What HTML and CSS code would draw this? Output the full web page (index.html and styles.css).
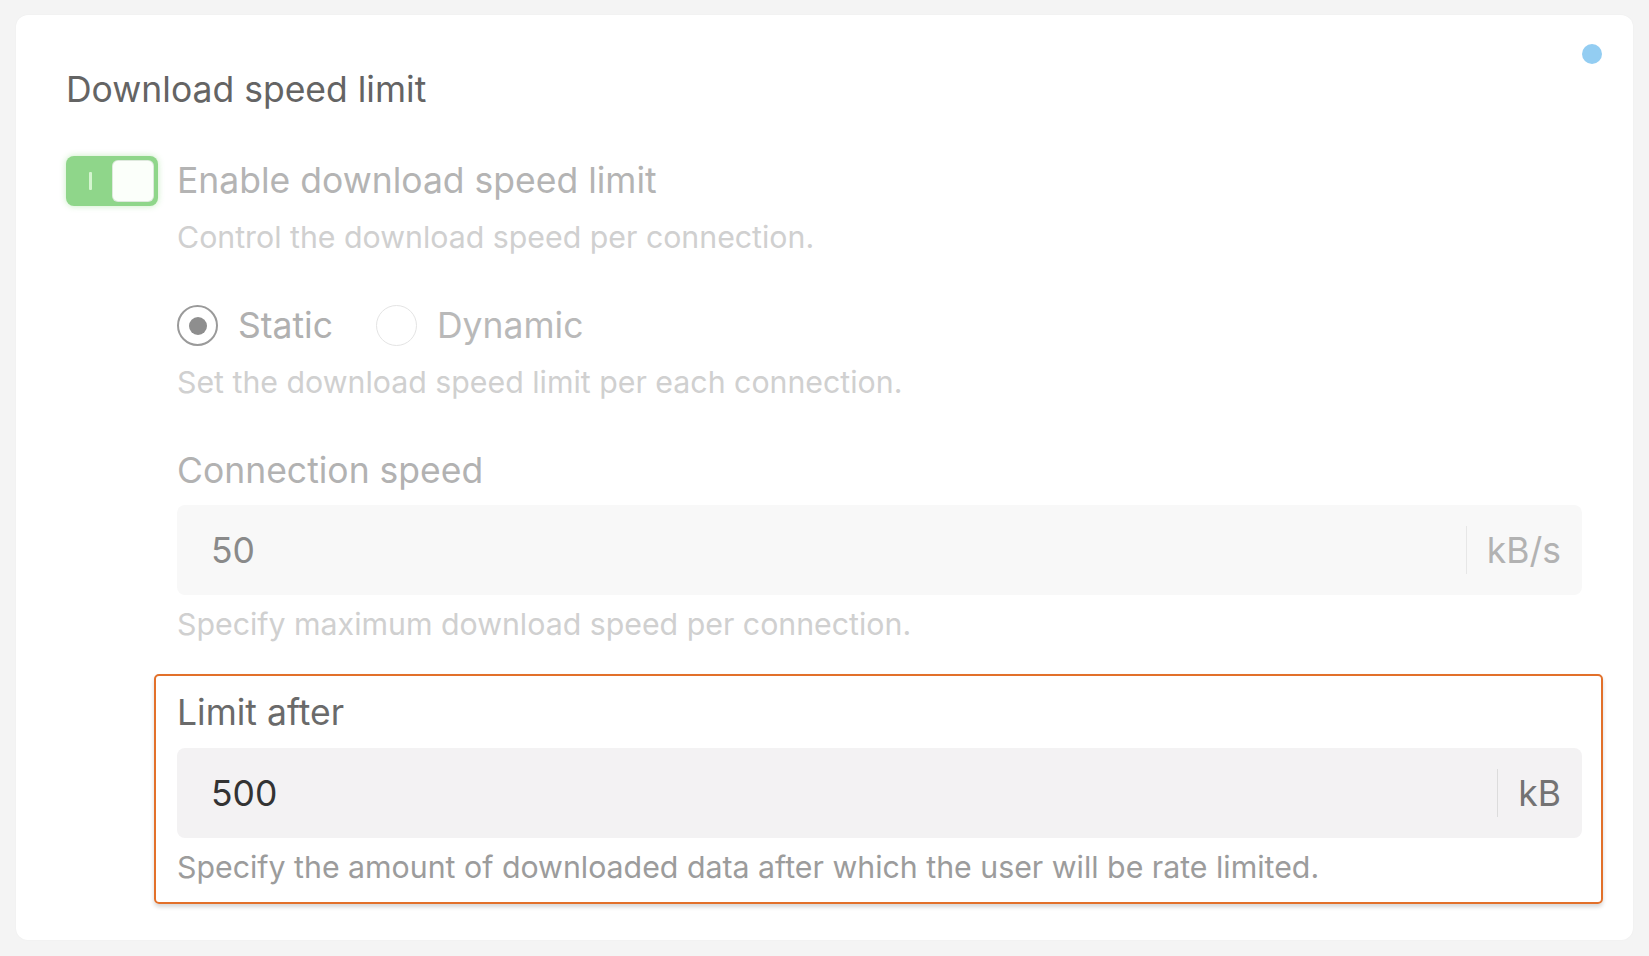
FILE: index.html
```html
<!DOCTYPE html>
<html lang="en">
<head>
<meta charset="utf-8">
<title>Download speed limit</title>
<link rel="stylesheet" href="styles.css">
</head>
<body>
<section class="card">
  <span class="status-dot"></span>
  <h1 class="card-title">Download speed limit</h1>

  <div class="setting">
    <div class="toggle" role="switch" aria-checked="true">
      <span class="toggle-mark"></span>
      <span class="toggle-knob"></span>
    </div>
    <div class="setting-body">
      <div class="setting-label">Enable download speed limit</div>
      <div class="help help-faded help-first">Control the download speed per connection.</div>

      <div class="radio-group">
        <label class="radio">
          <span class="radio-circle radio-checked"><span class="radio-dot"></span></span>
          <span class="radio-text">Static</span>
        </label>
        <label class="radio">
          <span class="radio-circle"></span>
          <span class="radio-text radio-text-off">Dynamic</span>
        </label>
      </div>
      <div class="help help-faded help-radio">Set the download speed limit per each connection.</div>

      <div class="field field-disabled">
        <div class="field-label">Connection speed</div>
        <div class="input">
          <span class="input-value">50</span>
          <span class="input-unit">kB/s</span>
        </div>
        <div class="help help-faded">Specify maximum download speed per connection.</div>
      </div>

      <div class="field field-highlight">
        <div class="field-label">Limit after</div>
        <div class="input">
          <span class="input-value">500</span>
          <span class="input-unit">kB</span>
        </div>
        <div class="help">Specify the amount of downloaded data after which the user will be rate limited.</div>
      </div>
    </div>
  </div>
</section>
</body>
</html>
```
FILE: styles.css
```css
* { box-sizing: border-box; }

html, body {
  margin: 0;
  padding: 0;
  background: #f4f4f4;
  font-family: "Inter", "Roboto", "Liberation Sans", sans-serif;
}

body {
  padding: 15px 16px 16px 16px;
}

.card {
  position: relative;
  background: #ffffff;
  border-radius: 12px;
  box-shadow: 0 0 2px rgba(0, 0, 0, 0.04);
  padding: 53px 51px 36px 50px;
}

.status-dot {
  position: absolute;
  top: 29px;
  right: 31px;
  width: 20px;
  height: 20px;
  border-radius: 50%;
  background: #93cdf2;
}

.card-title {
  margin: 0;
  font-size: 35.5px;
  line-height: 43px;
  font-weight: 400;
  color: #646464;
}

.setting {
  display: flex;
  gap: 19px;
  margin-top: 45px;
}

/* toggle */
.toggle {
  position: relative;
  flex: none;
  width: 92px;
  height: 50px;
  border-radius: 8px;
  background: #8fd68a;
  box-shadow: 0 0 6px rgba(130, 215, 120, 0.45);
}

.toggle-mark {
  position: absolute;
  left: 23px;
  top: 16px;
  width: 3px;
  height: 18px;
  border-radius: 1px;
  background: #d4f5cf;
}

.toggle-knob {
  position: absolute;
  top: 4px;
  right: 4px;
  width: 42px;
  height: 42px;
  border-radius: 6px;
  background: #fbfffa;
  border: 1px solid rgba(60, 110, 60, 0.15);
}

.setting-body {
  flex: 1;
  min-width: 0;
  display: flex;
  flex-direction: column;
}

.setting-label {
  font-size: 35.5px;
  line-height: 50px;
  color: #b4b4b4;
}

.help {
  font-size: 30.3px;
  line-height: 37px;
  color: #9c9c9c;
  margin-top: 10.5px;
}

.help-faded {
  color: #d0d0d0;
}

.help-first {
  margin-top: 12.5px;
}

/* radios */
.radio-group {
  display: flex;
  align-items: center;
  gap: 43px;
  margin-top: 49.5px;
}

.radio {
  display: flex;
  align-items: center;
  gap: 20px;
}

.radio-circle {
  width: 41px;
  height: 41px;
  border-radius: 50%;
  border: 1.5px solid #e4e4e4;
  display: flex;
  align-items: center;
  justify-content: center;
}

.radio-checked {
  border: 2px solid #9a9a9a;
}

.radio-dot {
  width: 18px;
  height: 18px;
  border-radius: 50%;
  background: #8e8e8e;
}

.radio-text {
  font-size: 35.5px;
  line-height: 41px;
  color: #b0b0b0;
}

.radio-text-off {
  color: #b9b9b9;
}

.help-radio {
  margin-top: 17.5px;
}

/* fields */
.field {
  display: flex;
  flex-direction: column;
}

.field-disabled {
  margin-top: 48px;
}

.field-label {
  font-size: 35.5px;
  line-height: 43px;
  color: #b2b2b2;
}

.input {
  display: flex;
  align-items: center;
  height: 90px;
  margin-top: 13.5px;
  padding: 0 21px 0 34px;
  border-radius: 8px;
  background: #f8f8f8;
}

.input-value {
  flex: 1;
  font-size: 35.5px;
  line-height: 43px;
  color: #8a8a8a;
}

.input-unit {
  display: flex;
  align-items: center;
  height: 48px;
  padding-left: 20px;
  border-left: 1.5px solid #e7e7e7;
  font-size: 35.5px;
  line-height: 43px;
  color: #b2b2b2;
}

.field-highlight {
  margin: 31.5px -21px 0 -23px;
  padding: 14.5px 19px 16.5px 21px;
  border: 2px solid #e2702a;
  border-radius: 5px;
  box-shadow: 0 3px 4px rgba(0, 0, 0, 0.16);
}

.field-highlight .field-label {
  color: #6a6a6a;
}

.field-highlight .input {
  margin-top: 14.5px;
  background: #f3f2f3;
}

.field-highlight .input-value {
  color: #333333;
}

.field-highlight .input-unit {
  border-left-color: #dcdcdc;
  color: #737373;
}
```
